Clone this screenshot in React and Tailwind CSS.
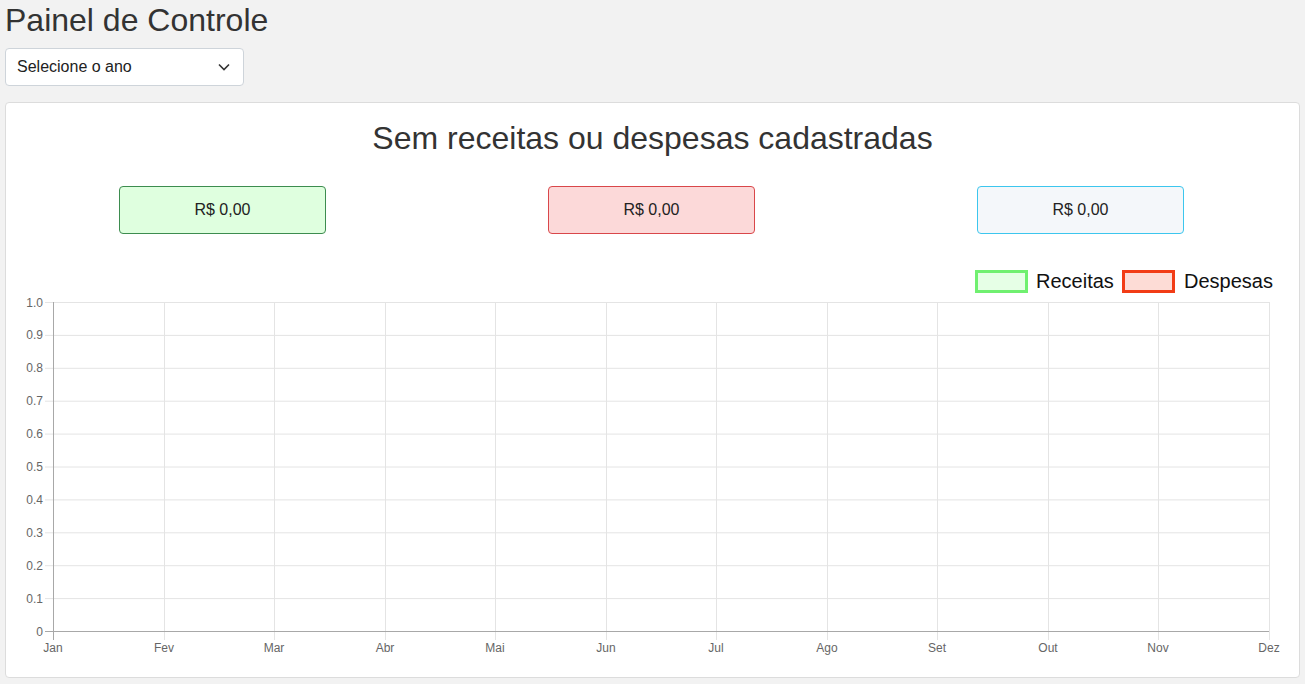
import React from 'react';

const months = ['Jan', 'Fev', 'Mar', 'Abr', 'Mai', 'Jun', 'Jul', 'Ago', 'Set', 'Out', 'Nov', 'Dez'];
const ticks = [0, 0.1, 0.2, 0.3, 0.4, 0.5, 0.6, 0.7, 0.8, 0.9, 1.0];

const X0 = 53;
const X1 = 1269;
const Y0 = 631;
const Y1 = 302;

const Chart = () => {
    const dx = (X1 - X0) / 11;
    const dy = (Y0 - Y1) / 10;
    return (
        <svg width="1293" height="410" className="block" style={{ fontFamily: '"Liberation Sans", Arial, sans-serif' }}>
            <g transform="translate(-6,-260)">
                {/* legend */}
                <rect x="976.5" y="271.5" width="50" height="20" fill="#e6ffe6" stroke="#70f070" strokeWidth="3" />
                <text x="1036" y="288" fontSize="20" fill="#111">Receitas</text>
                <rect x="1123.5" y="271.5" width="50" height="20" fill="#fddcd6" stroke="#f23c16" strokeWidth="3" />
                <text x="1184" y="288" fontSize="20" fill="#111">Despesas</text>

                {/* horizontal grid */}
                {ticks.map((t, j) => {
                    const y = Y0 - j * dy;
                    return (
                        <g key={t}>
                            <line x1={45} x2={X1} y1={y + 0.5} y2={y + 0.5} stroke={j === 0 ? '#a8a8a8' : '#e4e4e4'} strokeWidth="1" />
                            <text x={43} y={y + 4.5} fontSize="12" fill="#666" textAnchor="end">
                                {j === 0 ? '0' : t.toFixed(1)}
                            </text>
                        </g>
                    );
                })}

                {/* vertical grid */}
                {months.map((m, i) => {
                    const x = Math.round(X0 + i * dx);
                    return (
                        <g key={m}>
                            <line x1={x + 0.5} x2={x + 0.5} y1={Y1} y2={640} stroke={i === 0 ? '#a8a8a8' : '#e4e4e4'} strokeWidth="1" />
                            <text x={x} y={652} fontSize="12" fill="#666" textAnchor="middle">{m}</text>
                        </g>
                    );
                })}
                <line x1={X0} x2={X1} y1={Y0 + 0.5} y2={Y0 + 0.5} stroke="#a8a8a8" strokeWidth="1" />
            </g>
        </svg>
    );
};

const ValueBox = ({ className }) => (
    <div className="flex justify-center">
        <div className={`w-[207px] h-[48px] rounded-[4px] border flex items-center justify-center text-[16px] text-[#222] ${className}`}>
            R$ 0,00
        </div>
    </div>
);

export default function App() {
    return (
        <div className="min-h-screen bg-[#f2f2f2] px-[5px] pb-[5px]" style={{ fontFamily: '"Liberation Sans", Arial, sans-serif' }}>
            <h1 className="pt-[1px] text-[32px] leading-[38px] text-[#333]">Painel de Controle</h1>

            <div className="mt-[9px] w-[239px] h-[38px] bg-white border border-[#ced4da] rounded-[4px] flex items-center justify-between pl-[11px] pr-[13px] text-[16px] text-[#222]">
                <span>Selecione o ano</span>
                <svg width="12" height="8" viewBox="0 0 12 8">
                    <polyline points="1,1.5 6,6.5 11,1.5" fill="none" stroke="#333" strokeWidth="1.6" />
                </svg>
            </div>

            <div className="mt-[16px] bg-white border border-[#dcdcdc] rounded-[4px] pb-[7px]">
                <h2 className="pt-[16px] text-center text-[32px] leading-[38px] text-[#333]">
                    Sem receitas ou despesas cadastradas
                </h2>

                <div className="mt-[29px] ml-[2px] w-[1287px] grid grid-cols-3">
                    <ValueBox className="bg-[#dfffdf] border-[#3d8c4f]" />
                    <ValueBox className="bg-[#fcd9d9] border-[#d9474a]" />
                    <ValueBox className="bg-[#f4f7fa] border-[#3cc6ee]" />
                </div>

                <div className="mt-[26px]">
                    <Chart />
                </div>
            </div>
        </div>
    );
}
